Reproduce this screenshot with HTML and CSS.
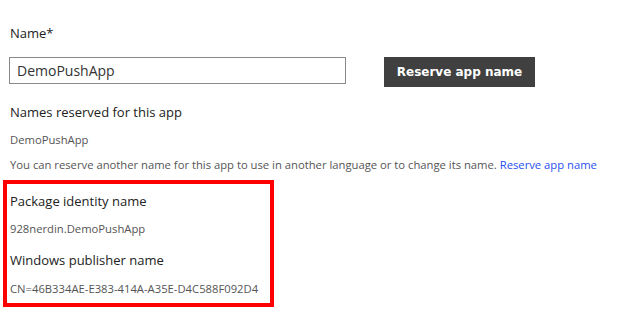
FILE: index.html
```html
<!DOCTYPE html>
<html>
<head>
<meta charset="utf-8">
<link rel="stylesheet" href="styles.css">
</head>
<body>
<div class="page">
  <div class="heading name-label">Name*</div>
  <div class="name-row">
    <div class="input">DemoPushApp</div>
    <button class="btn">Reserve app name</button>
  </div>
  <div class="heading reserved-label">Names reserved for this app</div>
  <div class="small reserved-value">DemoPushApp</div>
  <div class="small note">You can reserve another name for this app to use in another language or to change its name. <a class="link" href="#">Reserve app name</a></div>
  <div class="highlight">
    <div class="heading pkg-label">Package identity name</div>
    <div class="small pkg-value">928nerdin.DemoPushApp</div>
    <div class="heading pub-label">Windows publisher name</div>
    <div class="small pub-value">CN=46B334AE-E383-414A-A35E-D4C588F092D4</div>
  </div>
</div>
</body>
</html>
```

FILE: styles.css
```css
html, body {
  margin: 0;
  padding: 0;
  background: #ffffff;
}

.page {
  padding: 24px 0 0 10px;
  font-family: "Open Sans", "Noto Sans", sans-serif;
  color: #222222;
}

.heading {
  font-size: 13px;
  line-height: 18px;
  color: #222222;
}

.small {
  font-size: 11.25px;
  line-height: 14px;
  color: #555555;
}

.name-row {
  display: flex;
  align-items: flex-start;
  margin: 15px 0 0 -1px;
}

.input {
  box-sizing: border-box;
  width: 337px;
  height: 27px;
  border: 1px solid #8a8a8a;
  padding: 0 7px;
  font-size: 14px;
  line-height: 25px;
  color: #333333;
}

.btn {
  box-sizing: border-box;
  margin-left: 38px;
  width: 151px;
  height: 30px;
  border: none;
  background: #404040;
  color: #ffffff;
  font-family: "DejaVu Sans", sans-serif;
  font-weight: bold;
  font-size: 12px;
  padding: 0;
}

.reserved-label {
  margin-top: 16px;
}

.reserved-value {
  margin-top: 12px;
}

.note {
  margin-top: 11px;
}

.link {
  color: #1f4fef;
  text-decoration: none;
}

.highlight {
  box-sizing: border-box;
  width: 271px;
  height: 127px;
  margin: 8px 0 0 -7px;
  border: 4px solid #ff0000;
  padding: 8px 0 0 3px;
}

.pkg-value {
  margin-top: 12px;
}

.pub-label {
  margin-top: 15px;
}

.pub-value {
  margin-top: 13px;
}
```
